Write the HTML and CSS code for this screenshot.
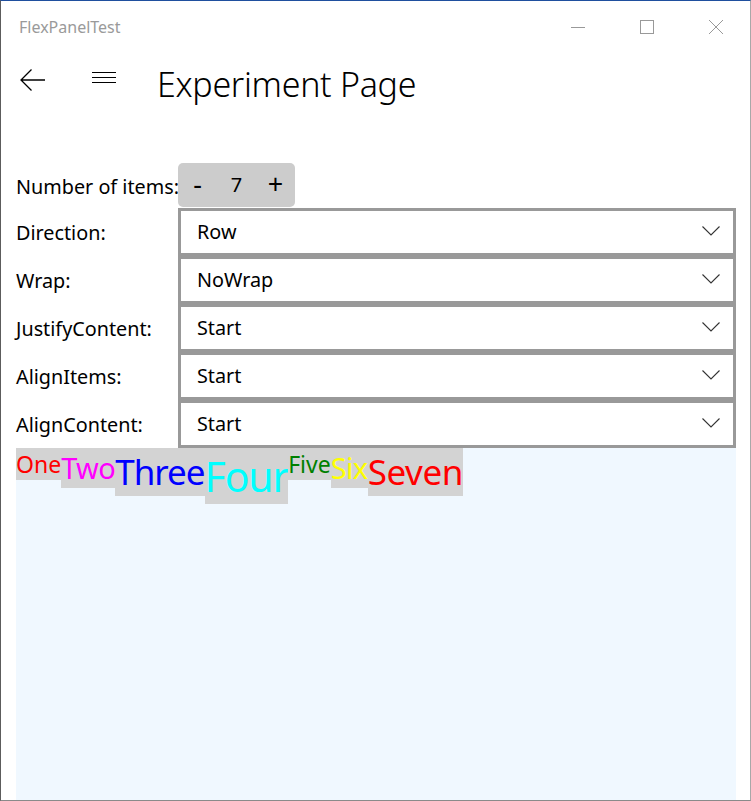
FILE: index.html
```html
<!DOCTYPE html>
<html>
<head>
<meta charset="utf-8">
<link rel="stylesheet" href="styles.css">
</head>
<body>
<div class="window">
  <div class="titlebar">
    <div class="app-title">FlexPanelTest</div>
    <div class="caption-buttons">
      <div class="cap-btn"><svg width="16" height="16" viewBox="0 0 16 16"><line x1="1" y1="8.5" x2="15" y2="8.5" stroke="#999" stroke-width="1"/></svg></div>
      <div class="cap-btn"><svg width="16" height="16" viewBox="0 0 16 16"><rect x="1.5" y="1.5" width="13" height="13" fill="none" stroke="#999" stroke-width="1"/></svg></div>
      <div class="cap-btn"><svg width="16" height="16" viewBox="0 0 16 16"><path d="M1 1L15 15M15 1L1 15" stroke="#999" stroke-width="1"/></svg></div>
    </div>
  </div>
  <div class="header">
    <svg class="back" width="26" height="22" viewBox="0 0 26 22"><path d="M1 11H25M11.5 0.5L1 11L11.5 21.5" fill="none" stroke="#000" stroke-width="1.3"/></svg>
    <svg class="hamburger" width="24" height="12" viewBox="0 0 24 12"><path d="M0 0.5H24M0 5.5H24M0 10.5H24" stroke="#000" stroke-width="1"/></svg>
    <div class="page-title">Experiment Page</div>
  </div>
  <div class="form">
    <div class="label">Number of items:</div>
    <div class="stepper-cell">
      <div class="stepper"><span class="step sign">-</span><span class="step">7</span><span class="step sign">+</span></div>
    </div>
    <div class="label">Direction:</div>
    <div class="combo"><span>Row</span><svg class="chev" width="18" height="10" viewBox="0 0 18 10"><path d="M0.5 0.5L9 9L17.5 0.5" fill="none" stroke="#333" stroke-width="1.1"/></svg></div>
    <div class="label">Wrap:</div>
    <div class="combo"><span>NoWrap</span><svg class="chev" width="18" height="10" viewBox="0 0 18 10"><path d="M0.5 0.5L9 9L17.5 0.5" fill="none" stroke="#333" stroke-width="1.1"/></svg></div>
    <div class="label">JustifyContent:</div>
    <div class="combo"><span>Start</span><svg class="chev" width="18" height="10" viewBox="0 0 18 10"><path d="M0.5 0.5L9 9L17.5 0.5" fill="none" stroke="#333" stroke-width="1.1"/></svg></div>
    <div class="label">AlignItems:</div>
    <div class="combo"><span>Start</span><svg class="chev" width="18" height="10" viewBox="0 0 18 10"><path d="M0.5 0.5L9 9L17.5 0.5" fill="none" stroke="#333" stroke-width="1.1"/></svg></div>
    <div class="label">AlignContent:</div>
    <div class="combo"><span>Start</span><svg class="chev" width="18" height="10" viewBox="0 0 18 10"><path d="M0.5 0.5L9 9L17.5 0.5" fill="none" stroke="#333" stroke-width="1.1"/></svg></div>
  </div>
  <div class="flexpanel">
    <div class="item s1 red">One</div>
    <div class="item s2 magenta">Two</div>
    <div class="item s3 tight blue">Three</div>
    <div class="item s4 cyan">Four</div>
    <div class="item s1 green">Five</div>
    <div class="item s2 yellow">Six</div>
    <div class="item s3 red">Seven</div>
  </div>
</div>
</body>
</html>
```
FILE: styles.css
```css
html, body {
  margin: 0;
  padding: 0;
  background: #fff;
}
body {
  font-family: "Noto Sans", "Open Sans", sans-serif;
  color: #000;
}
.window {
  width: 751px;
  height: 801px;
  box-sizing: border-box;
  border-top: 1px solid #1f4f9e;
  border-left: 1px solid #5c5c5c;
  border-right: 1px solid #a8a8a8;
  border-bottom: 1px solid #8a8a8a;
  overflow: hidden;
  display: flex;
  flex-direction: column;
}
.titlebar {
  height: 53px;
  flex: none;
  display: flex;
  align-items: center;
  justify-content: space-between;
}
.app-title {
  padding-left: 18px;
  padding-bottom: 1px;
  font-size: 16px;
  color: #9a9a9a;
}
.caption-buttons {
  display: flex;
  height: 100%;
}
.cap-btn {
  width: 69px;
  display: flex;
  align-items: center;
  justify-content: center;
  padding-bottom: 2px;
}
.header {
  height: 56px;
  flex: none;
  display: flex;
  align-items: center;
}
.back {
  margin-left: 19px;
  margin-bottom: 4px;
}
.hamburger {
  margin-left: 46px;
  margin-bottom: 8px;
}
.page-title {
  margin-left: 41px;
  margin-top: 4px;
  font-size: 34px;
  font-weight: 300;
  letter-spacing: -0.3px;
}
.form {
  margin-top: 53px;
  padding-left: 15px;
  display: grid;
  grid-template-columns: 162px 558px;
  grid-template-rows: 45px repeat(5, 48px);
  flex: none;
}
.label {
  display: flex;
  align-items: center;
  font-size: 19.8px;
  white-space: nowrap;
  padding-top: 1px;
}
.stepper-cell {
  display: flex;
  align-items: flex-start;
}
.stepper {
  width: 117px;
  height: 44px;
  border-radius: 5px;
  background: #cccccc;
  display: flex;
  align-items: center;
}
.step {
  flex: 1;
  text-align: center;
  font-size: 20px;
  padding-bottom: 2px;
}
.step.sign {
  font-size: 27px;
  padding-bottom: 4px;
}
.combo {
  box-sizing: border-box;
  border: 3px solid #999;
  background: #fff;
  display: flex;
  align-items: center;
  justify-content: space-between;
  padding: 0 13px 0 16px;
  font-size: 19.8px;
}
.combo span {
  padding-bottom: 1px;
}
.chev {
  margin-bottom: 3px;
}
.flexpanel {
  margin-left: 15px;
  width: 720px;
  flex: 1;
  background: #f0f8ff;
  display: flex;
  align-items: flex-start;
  justify-content: flex-start;
}
.item {
  background: #d3d3d3;
  white-space: nowrap;
}
.s1 { font-size: 23px; line-height: 32px; }
.s2 { font-size: 29px; line-height: 40px; letter-spacing: -0.6px; }
.s3 { font-size: 35px; line-height: 48px; letter-spacing: -0.4px; }
.s3.tight { letter-spacing: -1px; }
.s4 { font-size: 41px; line-height: 56px; letter-spacing: -1.2px; }
.red { color: #ff0000; }
.magenta { color: #ff00ff; }
.blue { color: #0000ff; }
.cyan { color: #00ffff; }
.green { color: #008000; }
.yellow { color: #ffff00; }
```
